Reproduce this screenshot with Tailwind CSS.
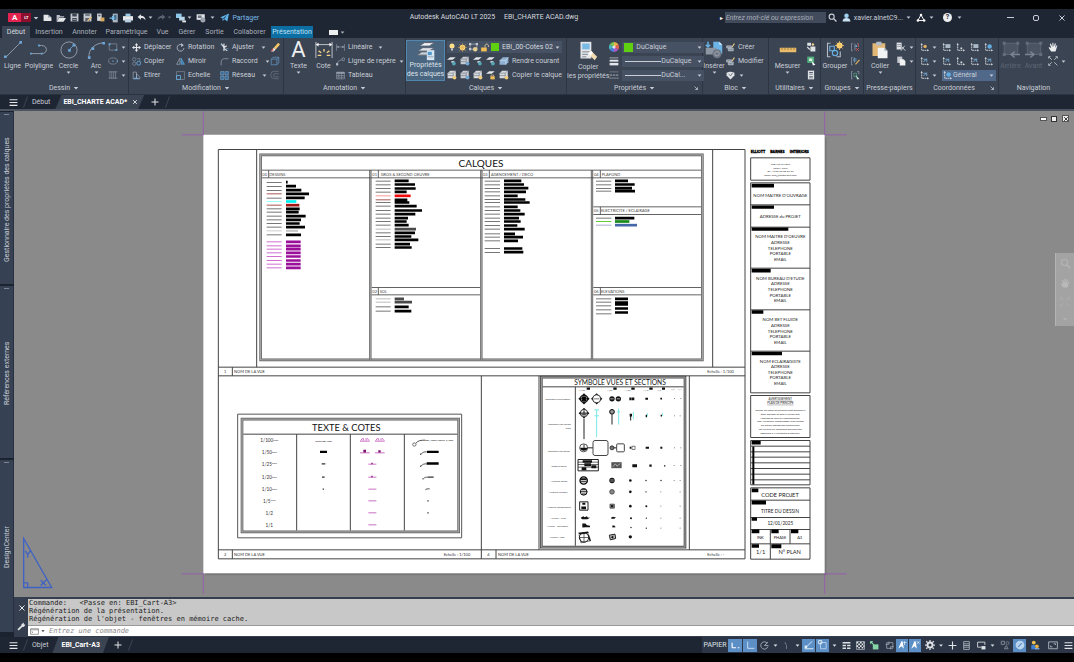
<!DOCTYPE html>
<html lang="fr">
<head>
<meta charset="utf-8">
<title>Autodesk AutoCAD LT 2025 - EBI_CHARTE ACAD.dwg</title>
<script src="https://cdn.jsdelivr.net/npm/@tailwindcss/browser@4"></script>
</head>
<body class="h-screen flex flex-col overflow-hidden bg-black py-[9px] font-['Roboto','Noto_Sans',sans-serif] text-[7px] leading-[10px] text-[#c9ced6] whitespace-nowrap">

<svg class="hidden" aria-hidden="true">
  <defs>
    <symbol id="dn" viewBox="0 0 8 8"><path d="M1 2.500h6L4 6z" fill="currentColor"/></symbol>
    <symbol id="menu" viewBox="0 0 16 16"><path d="M1 3h14M1 8h14M1 13h14" stroke="currentColor" stroke-width="2"/></symbol>
    <symbol id="plus" viewBox="0 0 16 16"><path d="M8 1v14M1 8h14" stroke="currentColor" stroke-width="2"/></symbol>
    <symbol id="x" viewBox="0 0 16 16"><path d="M3 3l10 10M13 3L3 13" stroke="currentColor" stroke-width="2"/></symbol>
    <symbol id="new" viewBox="0 0 16 16"><path d="M1 3h8l6 5v6H1z" fill="#e4e6e9"/><path d="M9 3v5h6" fill="#9aa1ab"/></symbol>
    <symbol id="open" viewBox="0 0 16 16"><path d="M1 14V3h5l1 2h6v2H5z" fill="#b9bec6"/><path d="M5 8h11l-4 6H1z" fill="#e4e6e9"/></symbol>
    <symbol id="save" viewBox="0 0 16 16"><path d="M1 1h14v14H1z" fill="#c3c8cf"/><path d="M4 1h8v5H4zM4 9h8v6H4z" fill="#3c4452"/><path d="M5 11h6v1H5z" fill="#ddd"/></symbol>
    <symbol id="saveas" viewBox="0 0 16 16"><path d="M1 1h14v14H1z" fill="#c3c8cf"/><path d="M4 2h8v3H4zM4 9h8v5H4z" fill="#5b626e"/><path d="M7 14l7-8 2 2-7 7z" fill="#e4bd74"/></symbol>
    <symbol id="web" viewBox="0 0 16 16"><path d="M2 1h8v13H2z" fill="#d5d8dc"/><path d="M8 8h7v7H8z" fill="#d9a860"/><path d="M4 3h4v3H4z" fill="#5b626e"/></symbol>
    <symbol id="mob" viewBox="0 0 16 16"><path d="M6 1h8v14H6z" fill="#aeb6c1"/><path d="M8 3h4v8H8z" fill="#3d6f92"/><path d="M1 8h6M5 5l3 3-3 3" stroke="#7cc3ee" stroke-width="2" fill="none"/></symbol>
    <symbol id="print" viewBox="0 0 16 16"><path d="M4 1h8v4H4z" fill="#9ac9ea"/><path d="M0 5h16v7H0z" fill="#e6e8ea"/><path d="M3 10h10v5H3z" fill="#b7cfe0"/></symbol>
    <symbol id="undo" viewBox="0 0 16 16"><path d="M1 7l6-5v3c5 0 8 3 8 8-2-3-4-4-8-4v3z" fill="currentColor"/></symbol>
    <symbol id="match" viewBox="0 0 16 16"><path d="M0 1h9v7H0z" fill="#8cc7ea"/><path d="M5 6h9v6H5z" fill="#b9d6e8"/><path d="M10 12h6v3h-6z" fill="#e4e6e9"/></symbol>
    <symbol id="mon" viewBox="0 0 16 16"><path d="M1 2h13v9H1z" fill="#dfe2e6"/><path d="M3 4h6v4H3z" fill="#6e7683"/><circle cx="11" cy="11" r="4" fill="#9aa3ae"/></symbol>
    <symbol id="plane" viewBox="0 0 16 16"><path d="M0 8l16-7-3 14-5-4-3 3-1-5z" fill="#5fb3ea"/><path d="M5 10l8-7-6 8z" fill="#1f2633"/></symbol>
    <symbol id="search" viewBox="0 0 16 16"><circle cx="6.500" cy="6.500" r="4.500" fill="none" stroke="currentColor" stroke-width="2"/><path d="M10 10l5 5" stroke="currentColor" stroke-width="2.500"/></symbol>
    <symbol id="user" viewBox="0 0 16 16"><circle cx="8" cy="5" r="4" fill="#9fd0f0"/><path d="M1 15c0-4 3-6 7-6s7 2 7 6z" fill="#c8e2f4"/></symbol>
    <symbol id="adsk" viewBox="0 0 16 16"><path d="M8 3L3 12M8 3l5 9M4 12h8" stroke="currentColor" stroke-width="1.500" fill="none"/><circle cx="8" cy="3" r="2" fill="currentColor"/><circle cx="3" cy="12" r="2" fill="currentColor"/><circle cx="13" cy="12" r="2" fill="currentColor"/></symbol>
    <symbol id="line" viewBox="0 0 20 20"><path d="M2 18L18 2" stroke="#99a2ae" fill="none"/><path d="M0 16h3v3H0zM17 0h3v3h-3z" fill="#6ba4d4"/></symbol>
    <symbol id="pline" viewBox="0 0 20 20"><path d="M1 14h12c7 0 7-9 0-9h-3" stroke="#99a2ae" fill="none"/><path d="M0 13h2v2H0zM9 4h2v2H9zM12 13h2v2h-2z" fill="#6ba4d4"/></symbol>
    <symbol id="circle" viewBox="0 0 20 20"><circle cx="10" cy="10" r="9" stroke="#99a2ae" fill="none"/><path d="M10 10l6-6" stroke="#6ba4d4"/><path d="M9 9h3v3H9zM14 3h3v3h-3z" fill="#6ba4d4"/></symbol>
    <symbol id="arc" viewBox="0 0 20 20"><path d="M2 18C2 8 9 3 18 2" stroke="#99a2ae" fill="none"/><path d="M1 17h3v3H1zM5 7h3v3H5zM17 1h3v3h-3z" fill="#6ba4d4"/></symbol>
    <symbol id="rect" viewBox="0 0 16 16"><path d="M2 3h12v10H2z" fill="none" stroke="#8e97a4"/><path d="M1 2h3v3H1zM12 11h3v3h-3z" fill="#6ba4d4"/></symbol>
    <symbol id="ell" viewBox="0 0 16 16"><ellipse cx="8" cy="8" rx="7" ry="5" fill="none" stroke="#8e97a4"/><path d="M7 7h2v2H7zM14 7h2v2h-2z" fill="#6ba4d4"/></symbol>
    <symbol id="hatch" viewBox="0 0 16 16"><path d="M3 2v12M6 2v12M9 2v12M12 2v12M1 3h14M1 13h14" stroke="#8e97a4" fill="none"/></symbol>
    <symbol id="move" viewBox="0 0 16 16"><path d="M8 0l3 4H5zM8 16l3-4H5zM0 8l4-3v6zM16 8l-4-3v6z" fill="#e4e6e9"/><path d="M8 3v10M3 8h10" stroke="#e4e6e9" stroke-width="2"/></symbol>
    <symbol id="copy" viewBox="0 0 16 16"><circle cx="4" cy="4" r="3" fill="none" stroke="#8fa3b8"/><circle cx="4" cy="12" r="3" fill="none" stroke="#8fa3b8"/><circle cx="12" cy="11" r="3.500" fill="none" stroke="#68b0e2" stroke-width="1.500"/><path d="M9 3h5v4" stroke="#8fa3b8" fill="none"/></symbol>
    <symbol id="stretch" viewBox="0 0 16 16"><path d="M2 2h6v12H2zM8 5l6 6v3H8z" fill="none" stroke="#b3bcc8"/><path d="M3 13h9" stroke="#68b0e2" stroke-width="2"/></symbol>
    <symbol id="rot" viewBox="0 0 16 16"><path d="M12 4a6 6 0 1 0 2 5" fill="none" stroke="#b3bcc8" stroke-width="1.500"/><path d="M9 0l5 4-5 3z" fill="#b3bcc8"/></symbol>
    <symbol id="mirror" viewBox="0 0 16 16"><path d="M7 2v11H1z" fill="none" stroke="#b3bcc8"/><path d="M9 2v11h6z" fill="#3e7db0" stroke="#68b0e2"/></symbol>
    <symbol id="scale" viewBox="0 0 16 16"><path d="M1 1h14v14H1z" fill="none" stroke="#8e97a4"/><path d="M1 8h7v7H1z" fill="none" stroke="#68b0e2" stroke-width="1.500"/></symbol>
    <symbol id="trim" viewBox="0 0 16 16"><path d="M2 1l6 8M7 1v13M12 5L6 9M8 10l5 4" stroke="#dfe2e6" stroke-width="2" fill="none"/><path d="M1 3h4M11 10h4" stroke="#68b0e2"/></symbol>
    <symbol id="fillet" viewBox="0 0 16 16"><path d="M2 15V9c0-4 3-6 6-6h7" fill="none" stroke="#8e97a4" stroke-width="1.500"/></symbol>
    <symbol id="array" viewBox="0 0 16 16"><path d="M1 1h6v6H1zM9 1h6v6H9zM1 9h6v6H1zM9 9h6v6H9z" fill="#3c6c96" stroke="#7fa9cc"/></symbol>
    <symbol id="erase" viewBox="0 0 16 16"><path d="M6 9l7-8 3 3-7 8z" fill="#f3c765"/><path d="M6 9l3 3-3 3H2z" fill="#eceef0"/><path d="M1 15l3-5 2 3z" fill="#dd5a4a"/></symbol>
    <symbol id="box" viewBox="0 0 16 16"><path d="M2 5h9v9H2zM2 5l3-3h9v9l-3 3M11 5l3-3" fill="none" stroke="#6ba4d4"/></symbol>
    <symbol id="offset" viewBox="0 0 16 16"><path d="M14 2H7a6 6 0 0 0 0 12h7M14 6H8a2 2 0 0 0 0 5h6" fill="none" stroke="#737c89"/></symbol>
    <symbol id="dim" viewBox="0 0 20 20"><path d="M1 1v18M19 1v18M1 4h18" stroke="#c9ced6" fill="none"/><path d="M1 4l3-2v4zM19 4l-3-2v4z" fill="#fff"/><path d="M10 9v3M4 11l3 2M16 11l-3 2M3 16h4M13 16h4" stroke="#f1d48a" stroke-width="1.500"/></symbol>
    <symbol id="lin" viewBox="0 0 16 16"><path d="M1 2v12M15 2v12M1 7h14" stroke="#9aa3b0" fill="none"/><path d="M1 7l4-2v4zM15 7l-4-2v4z" fill="#9aa3b0"/></symbol>
    <symbol id="lead" viewBox="0 0 16 16"><path d="M1 14c2-6 4-8 9-9" stroke="#b3bcc8" fill="none"/><circle cx="13" cy="4" r="2.500" fill="none" stroke="#b3bcc8"/><path d="M0 11h4v4H0z" fill="#b3bcc8"/></symbol>
    <symbol id="table" viewBox="0 0 16 16"><path d="M1 2h14v12H1zM1 8h14M1 11h14M5 5v9M10 5v9" fill="none" stroke="#9aa3b0"/><path d="M1 2h14v3H1z" fill="#9aa3b0"/></symbol>
    <symbol id="layers" viewBox="0 0 24 24"><path d="M1 17l6-4h15l-6 4z" fill="#c9cdd3" stroke="#555e6c"/><path d="M2 12l6-4h14l-6 4z" fill="#dde0e4" stroke="#555e6c"/><path d="M4 6l6-4h12l-6 4z" fill="#f1f2f4" stroke="#555e6c"/><path d="M13 11h9v12h-9z" fill="#d6e6f2"/><path d="M14 13h5v4h-5z" fill="#5499ce"/><path d="M14 19h7" stroke="#8b95a2"/></symbol>
    <symbol id="bulb" viewBox="0 0 16 16"><circle cx="8" cy="6" r="5" fill="#ffe08a"/><path d="M6 11h4v4H6z" fill="#c8ccd2"/></symbol>
    <symbol id="sun" viewBox="0 0 16 16"><circle cx="8" cy="8" r="5" fill="#ffd77a"/><path d="M8 0v16M0 8h16M2 2l12 12M14 2L2 14" stroke="#d7ab52"/></symbol>
    <symbol id="vpf" viewBox="0 0 16 16"><path d="M2 2h12v9H2z" fill="none" stroke="#c3c8cf"/><path d="M0 0h4v4H0zM12 0h4v4h-4zM0 9h4v4H0z" fill="#c3c8cf"/><circle cx="11" cy="11" r="4" fill="#e6cf8f"/></symbol>
    <symbol id="lock" viewBox="0 0 16 16"><path d="M2 8h10v7H2z" fill="#f1bd57"/><path d="M9 8V5c0-4 6-4 6 0v2" fill="none" stroke="#e8d3a0" stroke-width="1.500"/></symbol>
    <symbol id="l1" viewBox="0 0 16 16"><path d="M0 6l5-4h9l-5 4z" fill="#e4e6e9"/><path d="M7 8h5v3H7z" fill="#c3c8cf"/><circle cx="11" cy="12" r="3" fill="#55a7b8"/></symbol>
    <symbol id="l2" viewBox="0 0 16 16"><path d="M1 5l4-4h9v9l-4 3H1z" fill="#c8ccd2"/><path d="M1 5h9v8M10 5l4-4M1 9h9" stroke="#6e7683" fill="none"/><circle cx="12" cy="12" r="3" fill="#74a8d4"/></symbol>
    <symbol id="l3" viewBox="0 0 16 16"><path d="M1 5l4-4h9v9l-4 3H1z" fill="#d9dcdf"/><path d="M1 5h9v8M10 5l4-4M1 9h9" stroke="#6e7683" fill="none"/><circle cx="12" cy="12" r="3" fill="#f0cd7b"/></symbol>
    <symbol id="l4" viewBox="0 0 16 16"><path d="M0 6l5-4h9l-5 4z" fill="#e4e6e9"/><path d="M7 10h7v5H7z" fill="#f1bd57"/><path d="M8 10V8h4v2" stroke="#e8d3a0" fill="none"/></symbol>
    <symbol id="cur" viewBox="0 0 16 16"><path d="M1 7l5-5h9v8l-4 4H1z" fill="#8fb2d4"/><path d="M1 7h10v7M11 7l4-5" stroke="#d4e2ef" fill="none"/></symbol>
    <symbol id="cprop" viewBox="0 0 24 24"><path d="M3 1h13v20H3z" fill="#e4e6e9"/><path d="M5 3h9v7H5z" fill="#79b9e6"/><path d="M5 13h9M5 16h7M5 19h5" stroke="#6e7683"/><path d="M12 15l4-3 7 7-3 4z" fill="#f0dcb0"/><path d="M12 15l4-3 2 2-3 4z" fill="#fff"/></symbol>
    <symbol id="wheel" viewBox="0 0 16 16"><path d="M8 8V0a8 8 0 0 1 7 4z" fill="#f0b24a"/><path d="M8 8l7-4a8 8 0 0 1 0 8z" fill="#e2604f"/><path d="M8 8l7 4a8 8 0 0 1-7 4z" fill="#b05ac8"/><path d="M8 8v8a8 8 0 0 1-7-4z" fill="#4a7fdc"/><path d="M8 8l-7 4a8 8 0 0 1 0-8z" fill="#49b6c4"/><path d="M8 8L1 4a8 8 0 0 1 7-4z" fill="#7fc452"/><circle cx="8" cy="8" r="2.500" fill="#e4e6e9"/></symbol>
    <symbol id="lw" viewBox="0 0 16 16"><path d="M1 3h14" stroke="#e4e6e9"/><path d="M1 7.500h14" stroke="#e4e6e9" stroke-width="3"/><path d="M1 13h14" stroke="#e4e6e9" stroke-width="4"/></symbol>
    <symbol id="lt" viewBox="0 0 16 16"><path d="M1 3h14" stroke="#8e97a4"/><path d="M1 8h14" stroke="#8e97a4" stroke-width="2" stroke-dasharray="4 1"/><path d="M1 13h14" stroke="#8e97a4" stroke-width="2" stroke-dasharray="2 1"/></symbol>
    <symbol id="insert" viewBox="0 0 24 24"><path d="M11 1h8l4 4v12H11z" fill="#6db4e6"/><path d="M19 1l4 4h-4z" fill="#d5e8f6"/><path d="M1 9h14v9H1z" fill="#8d96a3"/><circle cx="16" cy="17" r="6" fill="#6e7683"/><circle cx="16" cy="17" r="3" fill="none" stroke="#aab1bb"/><path d="M4 1v7M1 5l3 3 3-3" stroke="#68b0e2" stroke-width="2" fill="none"/></symbol>
    <symbol id="blk" viewBox="0 0 16 16"><path d="M1 5h9v4H1zM4 9h9v5H4z" fill="#8d96a3" stroke="#c3c8cf"/><path d="M11 7l4-6" stroke="#f0d08a" stroke-width="2"/></symbol>
    <symbol id="tag" viewBox="0 0 16 16"><path d="M1 3c5-2 9-2 14 0v5l-7 7-7-7z" fill="#dfe2e6"/><path d="M5 5l3 4 4-6" stroke="#6e7683" stroke-width="1.500" fill="none"/></symbol>
    <symbol id="ruler" viewBox="0 0 24 24"><path d="M1 9h22v6H1z" fill="#e9bd6a"/><path d="M4 9v3M8 9v3M12 9v3M16 9v3M20 9v3" stroke="#8a6a30"/></symbol>
    <symbol id="qsel" viewBox="0 0 16 16"><path d="M2 1h6v5H2zM7 7h8v8H7z" fill="#dfe2e6"/><circle cx="11" cy="4" r="2" fill="#f0d08a"/><path d="M2 8l4 4" stroke="#dfe2e6" stroke-width="2"/></symbol>
    <symbol id="gsel" viewBox="0 0 16 16"><path d="M2 1h11v10H2z" fill="#53b07f"/><path d="M5 4h5v4H5z" fill="#dcefe4"/><path d="M9 8l6 6-4 1z" fill="#fff"/></symbol>
    <symbol id="calc" viewBox="0 0 16 16"><path d="M3 1h10v14H3z" fill="#dfe2e6"/><path d="M5 3h6v2H5zM5 7h6v1H5zM5 10h6v1H5zM5 12h6v1H5z" fill="#5b626e"/></symbol>
    <symbol id="group" viewBox="0 0 24 24"><path d="M6 3H2v18h4M14 21h5v-7" fill="none" stroke="#b3bcc8" stroke-width="1.500"/><path d="M5 7h6v6H5z" fill="none" stroke="#68b0e2" stroke-width="1.500"/><circle cx="12" cy="16" r="3.500" fill="none" stroke="#68b0e2" stroke-width="1.500"/><circle cx="18" cy="6" r="4" fill="#ffd77a"/><path d="M18 0v12M12 6h12M14 2l8 8M22 2l-8 8" stroke="#f2c566"/></symbol>
    <symbol id="g1" viewBox="0 0 16 16"><path d="M3 1H1v13h2M7 1v12M11 1h2" stroke="#b3bcc8" fill="none"/><path d="M8 4h3v3H8z" fill="#68b0e2"/><path d="M9 9l5 5M14 9l-5 5M13 1v6" stroke="#d9574e" stroke-width="1.500"/></symbol>
    <symbol id="g2" viewBox="0 0 16 16"><path d="M3 1H1v13h2M6 1v9" stroke="#b3bcc8" fill="none"/><path d="M5 3h4v4H5z" fill="none" stroke="#68b0e2"/><path d="M8 13l7-8" stroke="#e6b35e" stroke-width="2"/></symbol>
    <symbol id="g3" viewBox="0 0 16 16"><path d="M3 1H1v13h2M11 1h3v5" stroke="#b3bcc8" fill="none"/><path d="M5 4h5v6H5z" fill="none" stroke="#5fc08c"/><path d="M8 7l7 7-4 1z" fill="#bfe6cf"/></symbol>
    <symbol id="paste" viewBox="0 0 24 24"><path d="M2 3h17v17H2z" fill="#e2b775"/><path d="M7 1h7v5H7z" fill="#b3bcc8"/><path d="M9 9h9l4 4v10H9z" fill="#f1f2f4"/><path d="M18 9l4 4h-4z" fill="#a0a7b1"/></symbol>
    <symbol id="cut" viewBox="0 0 16 16"><path d="M1 1h8v11H1z" fill="#dfe2e6"/><path d="M2 4h6M2 7h6" stroke="#6e7683"/><path d="M8 6l7 8M14 6l-6 8" stroke="#c3c8cf" stroke-width="1.500"/></symbol>
    <symbol id="cpy" viewBox="0 0 16 16"><path d="M2 1h8v10H2z" fill="#c3c8cf"/><path d="M6 5h6l3 3v7H6z" fill="#f1f2f4"/></symbol>
    <symbol id="ucs" viewBox="0 0 16 16"><path d="M3 2v11h11" stroke="#dfe2e6" stroke-width="1.500" stroke-dasharray="3 1" fill="none"/><path d="M3 0l2 3H1zM16 13l-3-2v4z" fill="#dfe2e6"/></symbol>
    <symbol id="ucs0" viewBox="0 0 16 16"><use href="#ucs"/><path d="M8 8h3v3H8z" fill="#dfe2e6"/></symbol>
    <symbol id="ucs1" viewBox="0 0 16 16"><use href="#ucs"/><circle cx="9" cy="6" r="3" fill="#e8b362"/></symbol>
    <symbol id="ucs2" viewBox="0 0 16 16"><use href="#ucs"/><path d="M6 2h9v7H6z" fill="#aab8c8"/></symbol>
    <symbol id="ucs3" viewBox="0 0 16 16"><use href="#ucs"/><circle cx="10" cy="6" r="4" fill="#62ace0"/></symbol>
    <symbol id="ucs4" viewBox="0 0 16 16"><use href="#ucs"/><path d="M6 9l6-6M6 4h6v5" stroke="#7db2dc" stroke-width="1.500" fill="none"/></symbol>
    <symbol id="back" viewBox="0 0 24 24"><path d="M3 3h18v15H3z" fill="#4b5463" stroke="#636d7c"/><path d="M1 1h4v4H1zM19 1h4v4h-4zM1 16h4v4H1z" fill="#636d7c"/><path d="M13 18h11M17 14l-5 4 5 4" stroke="#7b8491" stroke-width="2" fill="none"/></symbol>
    <symbol id="fwd" viewBox="0 0 24 24"><path d="M3 3h18v15H3z" fill="#4b5463" stroke="#636d7c"/><path d="M1 1h4v4H1zM19 1h4v4h-4zM19 16h4v4h-4z" fill="#636d7c"/><path d="M0 18h11M7 14l5 4-5 4" stroke="#7b8491" stroke-width="2" fill="none"/></symbol>
    <symbol id="hand" viewBox="0 0 16 16"><path d="M5 15L1 9l1-1 3 2-2-7 1.500-.5L7 8V1h1.500L9 8l2-6 1.500.5L11.500 9 14 5l1 .5L12 15z" fill="#eceef0"/></symbol>
    <symbol id="zoomx" viewBox="0 0 16 16"><path d="M2 2l4 4M14 2l-4 4M2 14l4-4M10 10l5 5M1 4V1h3M12 1h3v3M1 12v3h3" stroke="#c9ced6" fill="none" stroke-width="1.300"/></symbol>
    <symbol id="corner" viewBox="0 0 8 8"><path d="M2 2l4 4M6 3v3H3" stroke="currentColor" fill="none"/></symbol>
  </defs>
</svg>

<header class="bg-[#1f2633] shrink-0">
  <div class="relative flex items-center h-[17px] pl-2">
    <button class="flex items-center bg-[#e2224f] text-white font-bold text-[8px] leading-[9px] h-[9px] pl-1" aria-label="Menu AutoCAD">A<span class="ml-1 bg-[#8c0f2e] text-[4px] h-[9px] w-[10px] flex items-center justify-center">LT</span></button>
    <button class="ml-[2px] w-[6px]" aria-label="Menu"><svg class="size-[6px]"><use href="#dn"/></svg></button>
    <div class="flex items-center gap-[4px] ml-[4px]">
      <button aria-label="Nouveau"><svg class="size-[9px]"><use href="#new"/></svg></button>
      <button aria-label="Ouvrir"><svg class="size-[10px]"><use href="#open"/></svg></button>
      <button aria-label="Enregistrer"><svg class="size-[9px]"><use href="#save"/></svg></button>
      <button aria-label="Enregistrer sous"><svg class="size-[9px]"><use href="#saveas"/></svg></button>
      <button aria-label="Ouvrir depuis le web"><svg class="size-[9px]"><use href="#web"/></svg></button>
      <button aria-label="Enregistrer sur mobile"><svg class="size-[10px]"><use href="#mob"/></svg></button>
      <button aria-label="Tracer"><svg class="size-[10px]"><use href="#print"/></svg></button>
      <button aria-label="Annuler"><svg class="size-[9px] text-[#e4e6e9]"><use href="#undo"/></svg></button>
      <svg class="size-[5px] -ml-[2px]"><use href="#dn"/></svg>
      <button aria-label="Rétablir"><svg class="size-[9px] text-[#596271] -scale-x-100"><use href="#undo"/></svg></button>
      <svg class="size-[5px] -ml-[3px] text-[#596271]"><use href="#dn"/></svg>
      <button aria-label="Gestion"><svg class="size-[10px]"><use href="#match"/></svg></button>
      <svg class="size-[5px] -ml-[3px]"><use href="#dn"/></svg>
      <button aria-label="Affichage"><svg class="size-[10px]"><use href="#mon"/></svg></button>
      <svg class="size-[5px]"><use href="#dn"/></svg>
      <button class="flex items-center gap-[3px] ml-px text-[#78b9e8]"><svg class="size-[9px]"><use href="#plane"/></svg>Partager</button>
    </div>
    <div class="absolute inset-x-0 top-[3px] text-center pointer-events-none pr-[86px] text-[#d5d9df]">Autodesk AutoCAD LT 2025 &nbsp;&nbsp;&nbsp; EBI_CHARTE ACAD.dwg</div>
    <div class="ml-auto flex items-center">
      <span class="text-white text-[6px] mr-[2px]">▸</span>
      <input class="w-[101px] h-[11px] bg-[#414b5c] px-px italic placeholder:text-[#a9b0bb]" aria-label="Recherche" placeholder="Entrez mot-clé ou expression">
      <button class="ml-[2px]" aria-label="Rechercher"><svg class="size-[9px]"><use href="#search"/></svg></button>
      <button class="ml-[5px] flex items-center gap-[3px]"><svg class="size-[9px]"><use href="#user"/></svg>xavier.alnetC9...<svg class="size-[5px]"><use href="#dn"/></svg></button>
      <button class="ml-[5px] flex items-center gap-[3px]" aria-label="Autodesk"><svg class="size-[10px] text-white"><use href="#adsk"/></svg><svg class="size-[5px]"><use href="#dn"/></svg></button>
      <button class="ml-[9px] flex items-center gap-[5px]" aria-label="Aide"><span class="size-[9px] rounded-full bg-[#eceef0] text-[#1f2633] font-bold leading-[9px]">?</span><svg class="size-[5px]"><use href="#dn"/></svg></button>
      <button class="ml-[45px] w-[7px] h-px bg-[#c9ced6]" aria-label="Réduire"></button>
      <button class="ml-[19px] size-[6px] border border-[#c9ced6] rounded-[2px]" aria-label="Restaurer"></button>
      <button class="ml-[19px] mr-[8px]" aria-label="Fermer"><svg class="size-[8px]"><use href="#x"/></svg></button>
    </div>
  </div>
  <nav class="flex items-stretch h-[12px] leading-[12px] text-[#a9b0bb]" aria-label="Ruban">
    <a href="#" class="ml-[2px] w-[28px] text-center bg-[#3b4453] text-[#d5d9df]">Début</a>
    <a href="#" class="w-[38px] text-center">Insertion</a>
    <a href="#" class="w-[33px] text-center">Annoter</a>
    <a href="#" class="w-[51px] text-center">Paramétrique</a>
    <a href="#" class="w-[21px] text-center">Vue</a>
    <a href="#" class="w-[28px] text-center">Gérer</a>
    <a href="#" class="w-[27px] text-center">Sortie</a>
    <a href="#" class="w-[43px] text-center">Collaborer</a>
    <a href="#" class="w-[42px] text-center bg-[#0d6ea3] text-[#bfe2f5]">Présentation</a>
    <button class="ml-[16px] flex items-center gap-[2px]" aria-label="Options du ruban"><span class="w-[9px] h-[5px] bg-[#eceef0]"></span><svg class="size-[5px]"><use href="#dn"/></svg></button>
  </nav>
</header>

<div class="flex h-[57px] shrink-0 bg-[#3b4453] border-b border-[#2b3341]">
  <section class="w-[129px] shrink-0 border-r border-[#2d3543] flex flex-col pt-[2px]">
    <div class="flex h-[42px]">
      <button class="w-[25px] flex flex-col items-center pt-px"><svg class="size-[18px]"><use href="#line"/></svg><span class="mt-[2px]">Ligne</span></button>
      <button class="w-[28px] flex flex-col items-center pt-px"><svg class="size-[18px]"><use href="#pline"/></svg><span class="mt-[2px]">Polyligne</span></button>
      <button class="w-[31px] flex flex-col items-center pt-px"><svg class="size-[18px]"><use href="#circle"/></svg><span class="mt-[2px]">Cercle</span><svg class="size-[5px] -mt-px"><use href="#dn"/></svg></button>
      <button class="w-[24px] flex flex-col items-center pt-px"><svg class="size-[18px]"><use href="#arc"/></svg><span class="mt-[2px]">Arc</span><svg class="size-[5px] -mt-px"><use href="#dn"/></svg></button>
      <div class="flex flex-col">
        <button class="h-[14px] flex items-center gap-[3px]" aria-label="Rectangle"><svg class="size-[10px]"><use href="#rect"/></svg><svg class="size-[5px]"><use href="#dn"/></svg></button>
        <button class="h-[14px] flex items-center gap-[3px]" aria-label="Ellipse"><svg class="size-[10px]"><use href="#ell"/></svg><svg class="size-[5px]"><use href="#dn"/></svg></button>
        <button class="h-[14px] flex items-center gap-[3px]" aria-label="Hachures"><svg class="size-[10px]"><use href="#hatch"/></svg><svg class="size-[5px]"><use href="#dn"/></svg></button>
      </div>
    </div>
    <button class="h-[12px] flex items-center justify-center gap-[3px]">Dessin<svg class="size-[6px]"><use href="#dn"/></svg></button>
  </section>

  <section class="w-[155px] shrink-0 border-r border-[#2d3543] flex flex-col pt-[2px]">
    <div class="flex h-[42px] pl-[3px]">
      <div class="w-[44px]">
        <button class="h-[14px] flex items-center gap-[3px]"><svg class="size-[9px]"><use href="#move"/></svg>Déplacer</button>
        <button class="h-[14px] flex items-center gap-[3px]"><svg class="size-[9px]"><use href="#copy"/></svg>Copier</button>
        <button class="h-[14px] flex items-center gap-[3px]"><svg class="size-[9px]"><use href="#stretch"/></svg>Etirer</button>
      </div>
      <div class="w-[44px]">
        <button class="h-[14px] flex items-center gap-[3px]"><svg class="size-[9px]"><use href="#rot"/></svg>Rotation</button>
        <button class="h-[14px] flex items-center gap-[3px]"><svg class="size-[9px]"><use href="#mirror"/></svg>Miroir</button>
        <button class="h-[14px] flex items-center gap-[3px]"><svg class="size-[9px]"><use href="#scale"/></svg>Echelle</button>
      </div>
      <div class="w-[50px]">
        <button class="h-[14px] flex items-center gap-[3px]"><svg class="size-[9px]"><use href="#trim"/></svg>Ajuster<svg class="size-[5px] ml-[4px]"><use href="#dn"/></svg></button>
        <button class="h-[14px] flex items-center gap-[3px]"><svg class="size-[9px]"><use href="#fillet"/></svg>Raccord<svg class="size-[5px] ml-[4px]"><use href="#dn"/></svg></button>
        <button class="h-[14px] flex items-center gap-[3px]"><svg class="size-[9px]"><use href="#array"/></svg>Réseau<svg class="size-[5px] ml-[4px]"><use href="#dn"/></svg></button>
      </div>
      <div>
        <button class="h-[14px] flex items-center" aria-label="Effacer"><svg class="size-[10px]"><use href="#erase"/></svg></button>
        <button class="h-[14px] flex items-center" aria-label="Décomposer"><svg class="size-[10px]"><use href="#box"/></svg></button>
        <button class="h-[14px] flex items-center" aria-label="Décaler"><svg class="size-[10px]"><use href="#offset"/></svg></button>
      </div>
    </div>
    <button class="h-[12px] flex items-center justify-center gap-[3px]">Modification<svg class="size-[6px]"><use href="#dn"/></svg></button>
  </section>

  <section class="w-[122px] shrink-0 border-r border-[#2d3543] flex flex-col pt-[2px]">
    <div class="flex h-[42px] pl-[2px]">
      <button class="w-[25px] flex flex-col items-center pt-px"><span class="h-[18px] text-[22px] leading-[18px] text-[#eceef0]">A</span><span class="mt-[2px]">Texte</span><svg class="size-[5px] -mt-px"><use href="#dn"/></svg></button>
      <button class="w-[25px] flex flex-col items-center pt-px"><svg class="size-[18px]"><use href="#dim"/></svg><span class="mt-[2px]">Cote</span></button>
      <div>
        <button class="h-[14px] flex items-center gap-[3px]"><svg class="size-[9px]"><use href="#lin"/></svg>Linéaire<svg class="size-[5px] ml-[2px]"><use href="#dn"/></svg></button>
        <button class="h-[14px] flex items-center gap-[3px]"><svg class="size-[9px]"><use href="#lead"/></svg>Ligne de repère<svg class="size-[5px]"><use href="#dn"/></svg></button>
        <button class="h-[14px] flex items-center gap-[3px]"><svg class="size-[9px]"><use href="#table"/></svg>Tableau</button>
      </div>
    </div>
    <button class="h-[12px] flex items-center justify-center gap-[3px]">Annotation<svg class="size-[6px]"><use href="#dn"/></svg></button>
  </section>

  <section class="w-[161px] shrink-0 border-r border-[#2d3543] flex flex-col pt-[2px]">
    <div class="flex h-[42px]">
      <button class="w-[39px] h-[41px] border border-[#5186ae] bg-[#4a6580] flex flex-col items-center text-[#dde2e8] leading-[9px] "><svg class="size-[20px] shrink-0"><use href="#layers"/></svg>Propriétés<br>des calques</button>
      <div class="pl-[2px]">
        <div class="h-[14px] flex items-center">
          <div class="relative flex items-center h-[12px] w-[115px] bg-[#465164] gap-[2px] pl-px">
            <svg class="size-[8px]"><use href="#bulb"/></svg><svg class="size-[9px]"><use href="#sun"/></svg><svg class="size-[9px]"><use href="#vpf"/></svg><svg class="size-[9px]"><use href="#lock"/></svg><span class="size-[8px] bg-[#5fd00f]"></span>
            <select class="appearance-none flex-1 min-w-0 bg-transparent text-[#d5d9df] pl-px" aria-label="Calque courant"><option>EBI_00-Cotes 02</option></select>
            <svg class="absolute right-[2px] size-[5px] pointer-events-none"><use href="#dn"/></svg>
          </div>
        </div>
        <div class="h-[14px] flex items-center gap-[3px]">
          <button aria-label="Désactiver"><svg class="size-[10px]"><use href="#l1"/></svg></button><button aria-label="Isoler"><svg class="size-[10px]"><use href="#l2"/></svg></button><button aria-label="Geler"><svg class="size-[10px]"><use href="#l1"/></svg></button><button aria-label="Verrouiller"><svg class="size-[10px]"><use href="#l1"/></svg></button>
          <button class="flex items-center gap-[3px]"><svg class="size-[10px]"><use href="#cur"/></svg>Rendre courant</button>
        </div>
        <div class="h-[14px] flex items-center gap-[3px]">
          <button aria-label="Activer"><svg class="size-[10px]"><use href="#l3"/></svg></button><button aria-label="Annuler l'isolation"><svg class="size-[10px]"><use href="#l2"/></svg></button><button aria-label="Dégeler"><svg class="size-[10px]"><use href="#l3"/></svg></button><button aria-label="Déverrouiller"><svg class="size-[10px]"><use href="#l4"/></svg></button>
          <button class="flex items-center gap-[3px]"><svg class="size-[10px]"><use href="#l3"/></svg>Copier le calque</button>
        </div>
      </div>
    </div>
    <button class="h-[12px] flex items-center justify-center gap-[3px]">Calques<svg class="size-[6px]"><use href="#dn"/></svg></button>
  </section>

  <section class="w-[136px] shrink-0 border-r border-[#2d3543] flex flex-col pt-[2px]">
    <div class="flex h-[42px]">
      <button class="w-[44px] flex flex-col items-center pt-px leading-[9px]"><svg class="size-[20px] shrink-0"><use href="#cprop"/></svg><span class="pt-[2px]">Copier<br>les propriétés</span></button>
      <div class="flex-1 pr-[3px]">
        <label class="relative h-[14px] flex items-center gap-[3px]"><svg class="size-[10px]"><use href="#wheel"/></svg><span class="flex items-center flex-1 h-[11px] bg-[#465164] pl-[2px] gap-[3px]"><span class="size-[9px] bg-[#5fd00f]"></span><select class="appearance-none flex-1 min-w-0" aria-label="Couleur"><option>DuCalque</option></select></span><svg class="absolute right-[2px] size-[5px] pointer-events-none"><use href="#dn"/></svg></label>
        <label class="relative h-[14px] flex items-center gap-[3px]"><svg class="size-[10px]"><use href="#lw"/></svg><span class="flex items-center flex-1 h-[11px] bg-[#465164] pl-[3px]"><span class="w-[36px] h-px bg-[#c9ced6]"></span><select class="appearance-none flex-1 min-w-0 mr-[12px]" aria-label="Epaisseur de ligne"><option>DuCalque</option></select></span><svg class="absolute right-[2px] size-[5px] pointer-events-none"><use href="#dn"/></svg></label>
        <label class="relative h-[14px] flex items-center gap-[3px]"><svg class="size-[10px]"><use href="#lt"/></svg><span class="flex items-center flex-1 h-[11px] bg-[#465164] pl-[3px]"><span class="w-[36px] h-px bg-[#c9ced6]"></span><select class="appearance-none flex-1 min-w-0 mr-[12px]" aria-label="Type de ligne"><option>DuCal...</option></select></span><svg class="absolute right-[2px] size-[5px] pointer-events-none"><use href="#dn"/></svg></label>
      </div>
    </div>
    <div class="relative h-[12px] flex items-center justify-center"><button class="flex items-center gap-[3px]">Propriétés<svg class="size-[6px]"><use href="#dn"/></svg></button><button class="absolute right-[3px]" aria-label="Options"><svg class="size-[6px]"><use href="#corner"/></svg></button></div>
  </section>

  <section class="w-[66px] shrink-0 border-r border-[#2d3543] flex flex-col pt-[2px]">
    <div class="flex h-[42px]">
      <button class="w-[22px] shrink-0 flex flex-col items-center pt-px"><svg class="size-[18px]"><use href="#insert"/></svg><span class="mt-[2px]">Insérer</span><svg class="size-[5px] -mt-px"><use href="#dn"/></svg></button>
      <div class="pl-px">
        <button class="h-[14px] flex items-center gap-[3px]"><svg class="size-[9px]"><use href="#blk"/></svg>Créer</button>
        <button class="h-[14px] flex items-center gap-[3px]"><svg class="size-[9px]"><use href="#blk"/></svg>Modifier</button>
        <button class="h-[14px] flex items-center gap-[4px]" aria-label="Attributs"><svg class="size-[9px]"><use href="#tag"/></svg><svg class="size-[5px]"><use href="#dn"/></svg></button>
      </div>
    </div>
    <button class="h-[12px] flex items-center justify-center gap-[3px]">Bloc<svg class="size-[6px]"><use href="#dn"/></svg></button>
  </section>

  <section class="w-[52px] shrink-0 border-r border-[#2d3543] flex flex-col pt-[2px]">
    <div class="flex h-[42px]">
      <button class="w-[37px] flex flex-col items-center pt-px"><svg class="size-[18px]"><use href="#ruler"/></svg><span class="mt-[2px]">Mesurer</span><svg class="size-[5px] -mt-px"><use href="#dn"/></svg></button>
      <div>
        <button class="h-[14px] flex items-center" aria-label="Sélection rapide"><svg class="size-[10px]"><use href="#qsel"/></svg></button>
        <button class="h-[14px] flex items-center" aria-label="Tout sélectionner"><svg class="size-[10px]"><use href="#gsel"/></svg></button>
        <button class="h-[14px] flex items-center" aria-label="Calculatrice"><svg class="size-[10px]"><use href="#calc"/></svg></button>
      </div>
    </div>
    <button class="h-[12px] flex items-center justify-center gap-[3px]">Utilitaires<svg class="size-[6px]"><use href="#dn"/></svg></button>
  </section>

  <section class="w-[43px] shrink-0 border-r border-[#2d3543] flex flex-col pt-[2px]">
    <div class="flex h-[42px]">
      <button class="w-[28px] flex flex-col items-center pt-px"><svg class="size-[18px]"><use href="#group"/></svg><span class="mt-[2px]">Grouper</span></button>
      <div class="pl-[2px]">
        <button class="h-[14px] flex items-center" aria-label="Dissocier"><svg class="size-[9px]"><use href="#g1"/></svg></button>
        <button class="h-[14px] flex items-center" aria-label="Modifier le groupe"><svg class="size-[9px]"><use href="#g2"/></svg></button>
        <button class="h-[14px] flex items-center" aria-label="Sélection de groupe"><svg class="size-[9px]"><use href="#g3"/></svg></button>
      </div>
    </div>
    <button class="h-[12px] flex items-center justify-center gap-[3px]">Groupes<svg class="size-[6px]"><use href="#dn"/></svg></button>
  </section>

  <section class="w-[52px] shrink-0 border-r border-[#2d3543] flex flex-col pt-[2px]">
    <div class="flex h-[42px]">
      <button class="w-[32px] flex flex-col items-center pt-px"><svg class="size-[18px]"><use href="#paste"/></svg><span class="mt-[2px]">Coller</span><svg class="size-[5px] -mt-px"><use href="#dn"/></svg></button>
      <div>
        <button class="h-[14px] flex items-center gap-[3px]" aria-label="Couper"><svg class="size-[10px]"><use href="#cut"/></svg><svg class="size-[5px]"><use href="#dn"/></svg></button>
        <button class="h-[14px] flex items-center gap-[3px]" aria-label="Copier dans le presse-papiers"><svg class="size-[10px]"><use href="#cpy"/></svg><svg class="size-[5px]"><use href="#dn"/></svg></button>
      </div>
    </div>
    <div class="h-[12px] flex items-center justify-center">Presse-papiers</div>
  </section>

  <section class="w-[83px] shrink-0 border-r border-[#2d3543] flex flex-col pt-[2px]">
    <div class="flex h-[42px] pl-[4px]">
      <div class="w-[22px]">
        <button class="h-[14px] flex items-center gap-[3px]" aria-label="SCU"><svg class="size-[9px]"><use href="#ucs1"/></svg><svg class="size-[5px]"><use href="#dn"/></svg></button>
        <button class="h-[14px] flex items-center gap-[3px]" aria-label="SCU vue"><svg class="size-[9px]"><use href="#ucs4"/></svg><svg class="size-[5px]"><use href="#dn"/></svg></button>
        <button class="h-[14px] flex items-center gap-[3px]" aria-label="SCU axe"><svg class="size-[9px]"><use href="#ucs4"/></svg><svg class="size-[5px]"><use href="#dn"/></svg></button>
      </div>
      <div>
        <div class="h-[14px] flex items-center gap-[5px]"><button aria-label="Icône SCU"><svg class="size-[9px]"><use href="#ucs2"/></svg></button><button aria-label="Origine"><svg class="size-[9px]"><use href="#ucs0"/></svg></button><button aria-label="SCU nommé"><svg class="size-[9px]"><use href="#ucs2"/></svg></button><button aria-label="SCU général"><svg class="size-[9px]"><use href="#ucs3"/></svg></button></div>
        <div class="h-[14px] flex items-center gap-[5px]"><button aria-label="SCU précédent"><svg class="size-[9px]"><use href="#ucs4"/></svg></button><button aria-label="SCU face"><svg class="size-[9px]"><use href="#ucs0"/></svg></button><button aria-label="SCU 3 points"><svg class="size-[9px]"><use href="#ucs4"/></svg></button><button aria-label="SCU Z"><svg class="size-[9px]"><use href="#ucs4"/></svg></button></div>
        <label class="relative h-[14px] flex items-center"><span class="flex items-center w-[54px] h-[11px] bg-[#50688a] gap-px pl-px"><svg class="size-[9px]"><use href="#ucs3"/></svg><select class="appearance-none flex-1 min-w-0" aria-label="SCU nommés"><option>Général</option></select></span><svg class="absolute right-[2px] size-[5px] pointer-events-none"><use href="#dn"/></svg></label>
      </div>
    </div>
    <div class="relative h-[12px] flex items-center justify-center pr-[6px]">Coordonnées<button class="absolute right-[3px]" aria-label="Options"><svg class="size-[6px]"><use href="#corner"/></svg></button></div>
  </section>

  <section class="flex-1 flex flex-col pt-[2px]">
    <div class="flex h-[42px]">
      <button class="w-[23px] flex flex-col items-center pt-px text-[#5d6675]"><svg class="size-[18px]"><use href="#back"/></svg><span class="mt-[2px]">Arrière</span></button>
      <button class="w-[23px] flex flex-col items-center pt-px text-[#5d6675]"><svg class="size-[18px]"><use href="#fwd"/></svg><span class="mt-[2px]">Avant</span></button>
      <div class="pl-[3px]">
        <button class="h-[14px] flex items-center" aria-label="Panoramique"><svg class="size-[10px]"><use href="#hand"/></svg></button>
        <button class="h-[14px] flex items-center gap-[3px]" aria-label="Zoom étendu"><svg class="size-[10px]"><use href="#zoomx"/></svg><svg class="size-[5px]"><use href="#dn"/></svg></button>
      </div>
    </div>
    <div class="h-[12px] flex items-center justify-center pr-[6px]">Navigation</div>
  </section>
</div>

<nav class="flex items-center h-[14px] shrink-0 bg-[#1f2633] pl-[9px]" aria-label="Fichiers">
  <button class="text-[#e4e6e9]" aria-label="Menu fichiers"><svg class="size-[9px]"><use href="#menu"/></svg></button>
  <span class="ml-[7px] h-[12px] w-px rotate-[20deg] bg-[#3b4453]"></span>
  <a href="#" class="ml-[6px]">Début</a>
  <span class="ml-[5px] flex items-center gap-[5px] h-[14px] bg-[#3b4453] pl-[8px] pr-[6px] [clip-path:polygon(6px_0,100%_0,calc(100%-6px)_100%,0_100%)] text-white font-bold"><a href="#">EBI_CHARTE ACAD*</a><button aria-label="Fermer l'onglet"><svg class="size-[6px]"><use href="#x"/></svg></button></span>
  <button class="ml-[7px] text-[#e4e6e9]" aria-label="Nouvel onglet"><svg class="size-[8px]"><use href="#plus"/></svg></button>
  <span class="ml-[8px] h-[12px] w-px rotate-[20deg] bg-[#3b4453]"></span>
</nav>

<main class="flex flex-1 min-h-0 border-t-2 border-[#4c5461] bg-[#2c3646]">
  <aside class="w-[14px] shrink-0 flex flex-col gap-[2px] bg-[#1b2230] pt-px pb-[5px]">
    <section class="flex-1 bg-[#364153] border-r border-[#273042] flex flex-col items-center"><span class="mt-[2px] w-[5px] h-px bg-[#7d8694]"></span><h2 class="flex-1 [writing-mode:vertical-rl] rotate-180 text-center">Gestionnaire des propriétés des calques</h2></section>
    <section class="flex-1 bg-[#364153] border-r border-[#273042] flex flex-col items-center"><span class="mt-[2px] w-[5px] h-px bg-[#7d8694]"></span><h2 class="flex-1 [writing-mode:vertical-rl] rotate-180 text-center">Références externes</h2></section>
    <section class="flex-1 bg-[#364153] border-r border-[#273042] flex flex-col items-center"><span class="mt-[2px] w-[5px] h-px bg-[#7d8694]"></span><h2 class="flex-1 [writing-mode:vertical-rl] rotate-180 text-center">DesignCenter</h2></section>
  </aside>
  <div class="flex-1 min-w-0 flex flex-col">
    <div class="relative flex-1 min-h-0 bg-[#8a8a8a]">
      <svg class="size-full block" viewBox="0 0 3180 1455" font-family="Lato, 'Open Sans', sans-serif" fill="#111" role="img" aria-label="Présentation EBI_Cart-A3">
        <g transform="translate(558 57)">
          <path d="M16 20H1880V1334H16z" fill="#7a7a7a"/>
          <path d="M10 13H1874V1328H10z" fill="#fff"/>
          <path d="M10-57V13M-56 13H10M1874-57V13H1940M10 1390V1330M-56 1330H10M1874 1390V1330H1940" stroke="#9a4cba" stroke-width="2" fill="none"/>

          <!-- cadres des fenêtres -->
          <path d="M55 57H1635V1285H55zM170 57V710M1538 57V710M55 710H1635M55 736H1635M97 710V736M844 736V1285M55 1258H1635M97 1258V1285M888 1258V1285M1017 736V1258M1468 736V1258" fill="none" stroke="#444" stroke-width="3"/>
          <g font-size="12" fill="#333">
            <text x="72" y="728">1</text><text x="102" y="728">NOM DE LA VUE</text><text x="1522" y="728">Echelle : 1/100</text>
            <text x="72" y="1277">2</text><text x="102" y="1277">NOM DE LA VUE</text><text x="731" y="1277">Echelle : 1/100</text>
            <text x="862" y="1277">4</text><text x="894" y="1277">NOM DE LA VUE</text><text x="1522" y="1277">Echelle : -</text>
          </g>

          <!-- CALQUES -->
          <path d="M182 73H1507V688H182z" fill="none" stroke="#5c5c5c" stroke-width="8"/>
          <path d="M182 73H1507V688H182z" fill="none" stroke="#a4a4a4" stroke-width="4"/>
          <path d="M511 119V688M844 119V688M1176 119V688" stroke="#5c5c5c" stroke-width="7"/>
          <path d="M511 119V688M844 119V688M1176 119V688" stroke="#a4a4a4" stroke-width="3"/>
          <path d="M186 119H1503M186 142H1503M206 119V142M535 119V142M868 119V142M1201 119V142M515 471H840M515 493H840M535 471V493M1180 229H1503M1180 252H1503M1201 229V252M1180 471H1503M1180 493H1503M1201 471V493" stroke="#444" stroke-width="2.500"/>
          <text x="843" y="108" font-size="30" text-anchor="middle">CALQUES</text>
          <g font-size="12" fill="#444">
            <text x="187" y="135">00</text><text x="208" y="135">DESSINS</text>
            <text x="517" y="135">01</text><text x="542" y="135">GROS &amp; SECOND OEUVRE</text>
            <text x="849" y="135">03</text><text x="873" y="135">AGENCEMENT / DECO</text>
            <text x="1182" y="135">04</text><text x="1205" y="135">PLAFOND</text>
            <text x="517" y="487">02</text><text x="539" y="487">SOL</text>
            <text x="1182" y="245">05</text><text x="1203" y="245">ELECTRICITE / ECLAIRAGE</text>
            <text x="1182" y="487">06</text><text x="1203" y="487">ELEVATIONS</text>
          </g>
          <g stroke="#777" stroke-width="3">
            <path d="M200 156h45M200 168h45M200 180h45M200 203h45M200 235h45M200 245h45M200 257h45M200 268h45M200 279h45M200 290h45M200 313h45"/>
            <path d="M200 190h45M200 224h45" stroke="#a55"/><path d="M200 213h45" stroke="#9ff"/><path d="M200 301h45" stroke="#ccc"/>
            <path d="M200 334h45M200 346h45M200 356h45M200 367h45M200 378h45M200 390h45M200 401h45M200 412h45" stroke="#d070d0"/>
            <path d="M527 152h45M527 163h45M527 174h45M527 185h45M527 216h45M527 227h45M527 240h45M527 251h45M527 263h45M527 273h45M527 284h45M527 307h45M527 318h45M527 341h45M527 351h45M527 529h45M527 542h45"/>
            <path d="M527 208h45" stroke="#a55"/><path d="M527 196h45" stroke="#f99"/><path d="M527 296h45M527 328h45M527 505h45M527 515h45" stroke="#bbb"/>
            <path d="M854 152h46M854 163h46M854 174h46M854 184h46M854 196h46M854 207h46M854 216h46M854 229h46M854 240h46M854 251h46M854 263h46M854 273h46M854 285h46M854 296h46M854 310h46M854 320h46M854 331h46M854 354h46M854 366h46"/>
            <path d="M1188 152h46M1188 163h46M1188 174h46M1188 182h46M1188 263h46M1188 505h46M1188 515h46M1188 526h46M1188 538h46M1188 550h46"/>
            <path d="M1188 273h46" stroke="#6c3"/><path d="M1188 284h46" stroke="#aac"/>
          </g>
          <g stroke="#000" stroke-width="8">
            <path d="M258 155h5M258 167h30M258 179h46M258 190h69M258 202h56M258 235h41M258 245h38M258 257h59M258 268h45M258 279h41M258 290h57M258 313h45"/>
            <path d="M258 213h31" stroke="#00f0f0"/><path d="M258 224h40" stroke="#a31515"/><path d="M258 301h36" stroke="#c4c4c4" stroke-width="6"/>
            <path d="M258 334h44M258 346h44M258 356h44M258 367h44M258 378h44M258 390h44M258 401h44M258 412h44" stroke="#9a109a"/>
            <path d="M584 151h42M584 162h61M584 174h63M584 184h36M584 208h38M584 216h44M584 227h66M584 240h82M584 251h62M584 263h40M584 273h36M584 284h42M584 307h61M584 318h50M584 328h71M584 341h46M584 351h51M584 529h42M584 542h50"/>
            <path d="M584 196h48" stroke="#f00c0c"/><path d="M584 296h64M584 505h28M584 515h52" stroke="#4a4a4a"/>
            <path d="M912 151h52M912 162h60M912 173h73M912 184h66M912 196h41M912 207h64M912 216h77M912 229h41M912 240h49M912 251h62M912 263h45M912 273h50M912 285h40M912 296h62M912 310h33M912 320h57M912 331h42M912 354h55M912 365h58"/>
            <path d="M1245 151h39M1245 162h59M1245 173h51M1245 182h60M1245 263h58M1245 505h39M1245 516h39M1245 522h39M1245 534h39M1245 546h39"/>
            <path d="M1245 273h43" stroke="#168a16"/><path d="M1245 284h66" stroke="#4468a8"/>
          </g>

          <!-- TEXTE & COTES -->
          <g transform="translate(0 720)">
            <path d="M113 131H785V502H113z" fill="none" stroke="#555" stroke-width="3"/>
            <path d="M126 146H776V484H126z" fill="none" stroke="#5c5c5c" stroke-width="8"/>
            <path d="M126 146H776V484H126z" fill="none" stroke="#a4a4a4" stroke-width="4"/>
            <path d="M130 191H772M290 191V480M451 191V480M613 191V480" stroke="#444" stroke-width="3"/>
            <text x="439" y="181" font-size="28" text-anchor="middle">TEXTE &amp; COTES</text>
            <g font-size="14" text-anchor="middle" fill="#333">
              <text x="208" y="214">1/100<tspan font-size="8" dy="-4">ème</tspan></text><text x="208" y="250">1/50<tspan font-size="8" dy="-4">ème</tspan></text><text x="208" y="285">1/25<tspan font-size="8" dy="-4">ème</tspan></text><text x="208" y="325">1/20<tspan font-size="8" dy="-4">ème</tspan></text><text x="208" y="361">1/10<tspan font-size="8" dy="-4">ème</tspan></text><text x="208" y="396">1/5<tspan font-size="8" dy="-4">ème</tspan></text><text x="208" y="432">1/2</text><text x="208" y="468">1/1</text>
            </g>
            <g font-size="8"><text x="346" y="213">Texte EBI 100</text><text x="676" y="212">EBI_Ligne repère 1/100</text></g>
            <path d="M360 244h21M681 244h35M680 279h36" stroke="#000" stroke-width="7"/>
            <path d="M365 280h11M366 320h8M684 320h17M368 356h4M682 391h4M682 427h4" stroke="#333" stroke-width="4"/>
            <path d="M648 218c6-8 14-9 28-9M664 250c4-5 8-6 16-6M664 286c4-5 8-6 16-6M671 324c4-4 7-4 13-4M676 358c3-3 6-3 13-3" fill="none" stroke="#333" stroke-width="2.500"/>
            <circle cx="643" cy="222" r="5" fill="none" stroke="#333" stroke-width="2"/><circle cx="662" cy="251" r="2"/><circle cx="662" cy="287" r="2"/><circle cx="669" cy="325" r="2"/>
            <path d="M480 212h29M525 212h29M480 247h29M525 247h29M505 281h24M505 320h24M505 356h24M505 391h24M505 427h24M505 463h24" stroke="#c050b8" stroke-width="2.500"/>
            <path d="M482 210l6-7M490 203v7M498 203v7M507 210l-6-7M527 210l6-7M535 203v7M543 203v7M552 210l-6-7" stroke="#d070c8" stroke-width="3"/>
            <path d="M490 238h8v8h-8zM535 239h7v7h-7zM514 277h4v4h-4zM514 316h4v4h-4z" fill="#7a1070"/>
          </g>

          <!-- SYMBOLE VUES ET SECTIONS -->
          <g transform="translate(990 720)">
            <path d="M34 20H465V530H34z" fill="#fff" stroke="#4c4c4c" stroke-width="8"/>
            <path d="M34 20H465V530H34z" fill="none" stroke="#a4a4a4" stroke-width="3"/>
            <path d="M38 49H461M136 49V526" stroke="#444" stroke-width="3"/>
            <text x="270" y="42" font-size="20" text-anchor="middle">SYMBOLE VUES ET SECTIONS</text>
            <path d="M170 51h10v7h-10zM250 51h10v7h-10zM304 51h10v7h-10zM358 51h10v7h-10zM396 51h9v7h-9z"/>
            <g font-size="7" fill="#555"><text x="146" y="60">1/100</text><text x="232" y="60">1/50</text><text x="286" y="60">1/20</text><text x="340" y="60">1/10</text><text x="382" y="60">1/5</text><text x="422" y="59">1/2</text><text x="444" y="59">1/1</text></g>
            <g font-size="8" text-anchor="end" fill="#333">
              <text x="120" y="88">Indicateur d'élévation</text><text x="123" y="162">Indicateur de coupe</text><text x="123" y="174">Titre</text><text x="120" y="244">Indicateur de détail</text><text x="110" y="288">Repère pièce</text><text x="112" y="333">Numéro porte</text><text x="112" y="367">Numéro fenêtre</text><text x="122" y="411">Numéro équipement</text><text x="108" y="445">Niveau - Plan</text><text x="114" y="470">Niveau - Elévation</text><text x="103" y="502">Flèche Nord</text>
            </g>
            <path d="M162 68l17 17-17 17-17-17zM162 112l16 16-16 16-16-16z"/>
            <circle cx="162" cy="85" r="11" fill="#fff" stroke="#000" stroke-width="3"/><path d="M151 85h22M162 74v22M155 78l14 14M169 78l-14 14" stroke="#000" stroke-width="4"/>
            <path d="M200 68l17 17-17 17-17-17z"/><circle cx="200" cy="85" r="12" fill="#fff" stroke="#000" stroke-width="2"/><path d="M192 85h16" stroke="#777" stroke-width="3"/>
            <circle cx="162" cy="128" r="11" fill="#fff" stroke="#000" stroke-width="2"/><path d="M151 128h22M162 120v8M155 133h14" stroke="#000" stroke-width="3"/>
            <path d="M162 144V206M246 132V162M302 136V150" stroke="#222" stroke-width="3"/>
            <path d="M193 118h14M193 136h14M200 118V200M266 114V162M261 124h9M310 124V146M352 128V138M398 128V136" stroke="#7be8e8" stroke-width="3"/>
            <circle cx="246" cy="85" r="8"/><circle cx="265" cy="85" r="8"/><path d="M241 85h10M260 85h10" stroke="#fff" stroke-width="2"/>
            <circle cx="246" cy="124" r="7" fill="#999" stroke="#000" stroke-width="3"/>
            <path d="M298 81h7v8h-7zM306 81h7v8h-7zM299 130h7v8h-7zM346 82h8v6h-8zM391 82h5v5h-5zM347 133h4v7h-4zM392 133h4v5h-4z"/>
            <circle cx="161" cy="232" r="12" fill="#fff" stroke="#000" stroke-width="2"/><path d="M150 232a12 12 0 0 0 23 0z"/><path d="M173 232h16M162 222v10M251 232h8" stroke="#222" stroke-width="3"/>
            <rect x="189" y="210" width="45" height="45" rx="6" fill="#fff" stroke="#444" stroke-width="3"/><rect x="260" y="220" width="23" height="24" rx="3" fill="#fff" stroke="#444" stroke-width="3"/>
            <circle cx="246" cy="232" r="6" fill="#777" stroke="#000" stroke-width="2"/><rect x="306" y="227" width="9" height="10" fill="none" stroke="#444" stroke-width="2"/>
            <path d="M299 229h5v6h-5zM347 229h10v6h-10zM391 229h6v6h-6z"/>
            <path d="M144 267h61v34h-61z" fill="#fff" stroke="#222" stroke-width="3"/><path d="M158 269h28v8h-28zM163 278h20v9h-20zM155 290h14v9h-14zM184 284h15v9h-15z"/><path d="M144 275h61M144 282h61M144 290h61" stroke="#222" stroke-width="2"/>
            <path d="M244 275h31v18h-31z" fill="#555"/><path d="M248 289l8-9 5 7 10-8" stroke="#ddd" stroke-width="2" fill="none"/>
            <path d="M307 281h14v9h-14zM358 282h7v7h-7zM402 284h4v4h-4z"/>
            <circle cx="161" cy="330" r="11" fill="#fff" stroke="#000" stroke-width="4"/><path d="M152 323h18v6h-18zM152 332h18v3h-18z"/>
            <circle cx="161" cy="364" r="10" fill="#fff" stroke="#000" stroke-width="3"/><path d="M150 362h22v3h-22zM156 356h11v3h-11zM156 369h11v3h-11z"/>
            <circle cx="246" cy="330" r="8"/><path d="M241 328h10M241 332h10" stroke="#bbb" stroke-width="2"/><circle cx="246" cy="364" r="7" fill="#888" stroke="#222" stroke-width="2"/>
            <path d="M149 394h25v25h-25z" fill="#fff" stroke="#222" stroke-width="3"/><path d="M157 397h9v6h-9zM154 408h14v8h-14z"/>
            <path d="M240 401h13v12h-13z" fill="#999" stroke="#222" stroke-width="2"/><path d="M243 404h7v6h-7z"/>
            <path d="M152 442l8-5 4 3 7-3 2 4 7 1-8 4h-16zM157 471v-12h9l5 5 9 2v4h-12zM243 442l6-3 9 2-5 4h-9zM247 471v-6h6l4 5z"/>
            <path d="M144 487l30-4 3 5-28 4zM176 490l7 21-4 2-5-18z"/><circle cx="162" cy="501" r="14" fill="none" stroke="#222" stroke-width="3"/><path d="M148 501h28M162 487v28M147 492l6 25 26-6" stroke="#222" stroke-width="2" fill="none"/>
            <path d="M238 494l17-3 2 13-16 4z" fill="#bbb" stroke="#222" stroke-width="3"/><path d="M242 500l8-5v10z"/>
            <circle cx="301" cy="330" r="4"/><circle cx="301" cy="364" r="4"/><circle cx="301" cy="407" r="4"/><circle cx="301" cy="499" r="5"/><circle cx="303" cy="443" r="3"/><circle cx="303" cy="471" r="2"/>
            <circle cx="348" cy="330" r="2"/><circle cx="348" cy="364" r="2"/><circle cx="349" cy="407" r="3"/><circle cx="349" cy="443" r="2"/><circle cx="349" cy="473" r="2"/><circle cx="393" cy="330" r="2"/>
            <path d="M391 364h3M391 407h3M391 443h3M391 473h3M432 84h3M451 84h3M432 136h3M449 136h3M432 232h3M451 232h3M431 285h3M451 285h3M431 330h3M449 330h3M449 364h3M449 407h3M449 443h3M449 473h3" stroke="#888" stroke-width="3"/>
          </g>

          <!-- cartouche -->
          <g transform="translate(1620 0)" fill="none" stroke="#444" stroke-width="3">
            <path d="M32 82H210V149H32zM32 157H210V787H32zM32 223H210M32 290H210M32 413H210M32 538H210M32 662H210"/>
            <path d="M32 795H210V921H32zM32 930H210V1063H32zM32 947H210M32 964H210M32 980H210M32 997H210M32 1014H210M32 1031H210M32 1048H210"/>
            <path d="M32 1072H210V1286H32zM32 1109H210M32 1161H210M32 1197H210M32 1240H210M91 1197V1286M150 1197V1240"/>
          </g>
          <g transform="translate(1620 0)" fill="#000">
            <path d="M35 160h67v11H35zM35 225h67v10H35zM35 291h110v10H35zM35 415h57v11H35zM35 539h35v11H35zM35 664h91v10H35zM35 931h27v11H35zM37 948h6v114h-6zM35 1074h20v11H35zM35 1110h43v12H35zM35 1161h16v10H35zM35 1197h23v11H35zM94 1197h22v11H94zM153 1197h22v11h-22zM35 1241h22v11H35zM94 1241h30v12H94z"/>
          </g>
          <g transform="translate(1620 0)" text-anchor="middle" fill="#222">
            <g font-size="11" font-weight="900" fill="#000" stroke="#000"><text x="54" y="67">ELLIOTT</text><text x="112" y="67">BARNES</text><text x="178" y="67">INTERIORS</text></g>
            <g font-size="8"><text x="121" y="103">128, rue d'Alésia</text><text x="121" y="114">75014 Paris</text><text x="121" y="125">Tél : (1)53 63 98 56 96</text><text x="121" y="136">email: info@ebinteriors.com</text></g>
            <g font-size="13">
              <text x="121" y="200">NOM MAITRE D'OUVRAGE</text><text x="121" y="262">ADRESSE du PROJET</text>
              <text x="121" y="323">NOM MAITRE D'OEUVRE</text><text x="121" y="340">ADRESSE</text><text x="121" y="357">TELEPHONE</text><text x="121" y="373">PORTABLE</text><text x="121" y="390">EMAIL</text>
              <text x="121" y="447">NOM BUREAU D'ETUDE</text><text x="121" y="464">ADRESSE</text><text x="121" y="481">TELEPHONE</text><text x="121" y="498">PORTABLE</text><text x="121" y="514">EMAIL</text>
              <text x="121" y="572">NOM BET FLUIDE</text><text x="121" y="589">ADRESSE</text><text x="121" y="606">TELEPHONE</text><text x="121" y="622">PORTABLE</text><text x="121" y="639">EMAIL</text>
              <text x="121" y="696">NOM ECLAIRAGISTE</text><text x="121" y="713">ADRESSE</text><text x="121" y="729">TELEPHONE</text><text x="121" y="746">PORTABLE</text><text x="121" y="763">EMAIL</text>
            </g>
            <g font-size="9" text-decoration="underline"><text x="121" y="808">AVERTISSEMENT</text><text x="121" y="820">PLAN DE PRINCIPE</text></g>
            <g font-size="8"><text x="121" y="841">Toutes les côtes et surfaces sont données à</text><text x="121" y="852">titre indicatif et sont à vérifier par</text><text x="121" y="864">l'entreprise sous sa responsabilité.</text><text x="121" y="875">Ceci, en bonne coordination avec toutes</text><text x="121" y="887">les autres entreprises concernées.</text><text x="121" y="898">Les erreurs ou omissions doivent être</text><text x="121" y="910">signalées à l'Architecte d'Intérieur.</text></g>
            <text x="120" y="1098" font-size="17">CODE PROJET</text><text x="120" y="1146" font-size="14">TITRE DU DESSIN</text><text x="121" y="1184" font-size="14">12/01/2025</text>
            <g font-size="12"><text x="61" y="1224">INK</text><text x="120" y="1224">PHASE</text><text x="179" y="1224">A3</text></g>
            <g font-size="17"><text x="62" y="1271">1/1</text><text x="149" y="1270">N° PLAN</text></g>
          </g>
        </g>
        <g fill="none" stroke="#3f62c4" stroke-width="4"><path d="M29 1281V1428H113zM29 1414h12v14M34 1318l7 11 10-13M41 1329v10M80 1406l16 16M98 1404l-18 18"/></g>
      </svg>
      <div class="absolute right-[5px] top-[4px] flex items-center gap-[5px] text-[#333]">
        <button class="w-[5px] h-[2px] bg-white outline outline-[#555]" aria-label="Réduire la vue"></button>
        <button class="size-[6px] border border-[#333] bg-[#eee]" aria-label="Restaurer la vue"></button>
        <button class="size-[7px] border border-[#555] bg-[#eee] flex items-center justify-center text-black" aria-label="Fermer la vue"><svg class="size-[6px] shrink-0"><use href="#x"/></svg></button>
      </div>
      <div class="absolute right-0 top-[142px] w-[19px] h-[73px] bg-[#a3a3a3] border-l border-[#b4b4b4] flex flex-col items-center justify-around text-[#b2b2b2]">
        <button aria-label="Zoom fenêtre"><svg class="size-[11px]"><use href="#search"/></svg></button>
        <button class="opacity-30" aria-label="Panoramique vue"><svg class="size-[10px]"><use href="#hand"/></svg></button>
        <button class="opacity-30" aria-label="Zoom vue"><svg class="size-[10px]"><use href="#zoomx"/></svg></button>
        <button aria-label="Options de navigation"><svg class="size-[6px]"><use href="#dn"/></svg></button>
      </div>
    </div>
    <div class="h-[40px] shrink-0 flex pt-[2px] pb-px bg-[#343e4e]">
      <div class="w-[14px] flex flex-col items-center justify-around text-[#e4e6e9] pl-px">
        <button aria-label="Fermer la ligne de commande"><svg class="size-[8px]"><use href="#x"/></svg></button>
        <button aria-label="Personnaliser"><svg class="size-[9px]" viewBox="0 0 16 16"><path d="M2 14l7-7" stroke="currentColor" stroke-width="3"/><path d="M8 4l4-3v3l3 1-3 4-4-1z" fill="currentColor"/></svg></button>
      </div>
      <div class="flex-1 flex flex-col font-['DejaVu_Sans_Mono','Liberation_Mono',monospace] text-[#222]">
        <div class="flex-1 bg-[#c8c8c8] pl-px text-[7px] leading-[8px] whitespace-pre"><p>Commande:   &lt;Passe en: EBI_Cart-A3&gt;</p><p>Régénération de la présentation.</p><p>Régénération de l'objet - fenêtres en mémoire cache.</p></div>
        <label class="h-[11px] bg-white border-t border-[#999] flex items-center pl-[2px] gap-[2px]"><svg class="w-[9px] h-[7px] text-[#555]" viewBox="0 0 16 12"><path d="M1 1h14v10H1zM1 3h14M3 6l2 1-2 2" fill="none" stroke="currentColor"/></svg><svg class="size-[4px]"><use href="#dn"/></svg><input class="flex-1 text-[7px] italic placeholder:text-[#8a8a8a] pl-[2px]" placeholder="Entrez une commande" aria-label="Ligne de commande"></label>
      </div>
    </div>
  </div>
</main>

<footer class="flex items-center h-[16px] shrink-0 bg-[#1f2633] pl-[9px]">
  <button class="text-[#e4e6e9]" aria-label="Menu des présentations"><svg class="size-[9px]"><use href="#menu"/></svg></button>
  <span class="ml-[7px] h-[12px] w-px rotate-[20deg] bg-[#3b4453]"></span>
  <a href="#" class="ml-[6px]">Objet</a>
  <a href="#" class="ml-[4px] h-[16px] leading-[16px] bg-[#3b4453] px-[9px] [clip-path:polygon(6px_0,100%_0,calc(100%-6px)_100%,0_100%)] text-white font-bold">EBI_Cart-A3</a>
  <button class="ml-[5px] text-[#e4e6e9]" aria-label="Nouvelle présentation"><svg class="size-[8px]"><use href="#plus"/></svg></button>
  <span class="ml-[8px] h-[12px] w-px rotate-[20deg] bg-[#3b4453]"></span>
  <div class="ml-auto flex items-center h-[16px] bg-[#2c3646] text-[#dfe2e6]">
    <button class="w-[26px] text-center">PAPIER</button>
    <button class="w-[14px] h-[13px] mr-px bg-[#5c8fc6] flex items-center justify-center" aria-label="Grille"><svg class="size-[9px]" viewBox="0 0 16 16"><path d="M2 3v9M2 12h7M12 12h3" stroke="#fff" stroke-width="2"/></svg></button>
    <button class="w-[14px] h-[13px] mr-px bg-[#5c8fc6] flex items-center justify-center" aria-label="Ortho"><svg class="size-[9px]" viewBox="0 0 16 16"><path d="M3 1v12h12" stroke="#dbe9f7" stroke-width="1.500" fill="none"/></svg></button>
    <button class="w-[13px] flex justify-center" aria-label="Repérage polaire"><svg class="size-[9px]" viewBox="0 0 16 16"><path d="M13 4a6.500 6.500 0 1 0 1 6M8 8h7M8 8l6-6" stroke="#aab1bb" stroke-width="1.500" fill="none"/></svg></button>
    <svg class="w-[9px] h-[5px]"><use href="#dn"/></svg>
    <button class="w-[13px] flex justify-center" aria-label="Isométrique"><svg class="size-[9px]" viewBox="0 0 16 16"><path d="M5 2l3 6v6" stroke="#7d8694" stroke-width="1.500" fill="none"/></svg></button>
    <svg class="w-[9px] h-[5px]"><use href="#dn"/></svg>
    <button class="w-[13px] h-[13px] mr-px bg-[#5c8fc6] flex items-center justify-center" aria-label="Repérage d'accrochage"><svg class="size-[10px]" viewBox="0 0 16 16"><path d="M1 14h14M3 12L13 2" stroke="#e2eefa" stroke-width="1.500"/><path d="M1 9h4v4H1z" fill="#e2eefa"/></svg></button>
    <button class="w-[13px] h-[13px] mr-px bg-[#5c8fc6] flex items-center justify-center" aria-label="Accrochage aux objets"><svg class="size-[10px]" viewBox="0 0 16 16"><path d="M4 4h9v10H4z" stroke="#e2eefa" fill="none"/><path d="M1 1h5v5H1z" fill="none" stroke="#e2eefa" stroke-width="1.500"/></svg></button>
    <svg class="w-[9px] h-[5px]"><use href="#dn"/></svg>
    <button class="w-[14px] flex justify-center" aria-label="Epaisseurs"><svg class="size-[9px]" viewBox="0 0 16 16"><path d="M1 3h14M1 8h6M9 8h6M1 13h6M9 13h6" stroke="currentColor" stroke-width="2.500"/></svg></button>
    <button class="w-[14px] flex justify-center" aria-label="Transparence"><svg class="size-[9px]" viewBox="0 0 16 16"><path d="M1 1h14v14H1z" fill="none" stroke="currentColor"/><path d="M1 3h14M1 9h14" stroke="currentColor" stroke-width="3" stroke-dasharray="3"/><path d="M4 6h12M4 12h12" stroke="currentColor" stroke-width="3" stroke-dasharray="3"/></svg></button>
    <button class="w-[15px] flex justify-center" aria-label="Cycle de sélection"><svg class="size-[9px]" viewBox="0 0 16 16"><path d="M5 6h10v9H5z" fill="#86d6a8"/><path d="M1 1l6 6M1 1h4M1 1v4" stroke="#86d6a8" stroke-width="2"/></svg></button>
    <button class="w-[14px] flex justify-center" aria-label="Filtrage"><svg class="size-[9px]" viewBox="0 0 16 16"><path d="M3 3h11v10H3zM7 1v5H1M15 10h-5v5" stroke="#9aa3b0" stroke-width="1.500" fill="none"/></svg></button>
    <button class="w-[12px] h-[13px] mr-px bg-[#5c8fc6] flex items-center justify-center" aria-label="Visibilité des annotations"><svg class="size-[10px]" viewBox="0 0 16 16"><path d="M2 14l5-12h2l2 12-4-4z" fill="#fff"/><path d="M12 2v6M10 4h5" stroke="#fff"/></svg></button>
    <button class="w-[12px] h-[13px] mr-px bg-[#5c8fc6] flex items-center justify-center" aria-label="Echelle automatique"><svg class="size-[10px]" viewBox="0 0 16 16"><path d="M2 14l5-12h2l2 12-4-4z" fill="#fff"/><path d="M11 2l4 4M15 2l-4 4" stroke="#fff"/></svg></button>
    <button class="w-[15px] flex justify-center" aria-label="Espace de travail"><svg class="size-[10px]" viewBox="0 0 16 16"><circle cx="8" cy="8" r="4" fill="none" stroke="currentColor" stroke-width="3"/><path d="M8 0v3M8 13v3M0 8h3M13 8h3M2 2l2 2M12 12l2 2M14 2l-2 2M2 14l2-2" stroke="currentColor" stroke-width="2"/></svg></button>
    <svg class="w-[8px] h-[5px]"><use href="#dn"/></svg>
    <button class="w-[14px] flex justify-center" aria-label="Moniteur d'annotations"><svg class="size-[9px]"><use href="#plus"/></svg></button>
    <button class="w-[15px] flex justify-center" aria-label="Unités"><svg class="size-[9px]" viewBox="0 0 16 16"><path d="M3 1h10v14H3zM3 5h10M3 8h10M3 11h10" stroke="#aab1bb" stroke-width="1.500" fill="none"/></svg></button>
    <button class="w-[14px] flex justify-center" aria-label="Propriétés rapides"><svg class="size-[9px]" viewBox="0 0 16 16"><path d="M8 11H1V2h13v5" stroke="currentColor" stroke-width="1.500" fill="none"/><path d="M8 9h7v6H8z" fill="currentColor"/></svg></button>
    <svg class="w-[9px] h-[5px]"><use href="#dn"/></svg>
    <button class="w-[15px] flex justify-center" aria-label="Isoler des objets"><svg class="size-[10px]" viewBox="0 0 16 16"><path d="M2 2h5v5H2zM7 14l3-5 3 5z" stroke="#8e97a4" fill="none" stroke-width="1.300"/><circle cx="12" cy="5" r="2.500" stroke="#8e97a4" fill="none"/></svg></button>
    <button class="w-[13px] h-[13px] mx-px bg-[#5c8fc6] flex items-center justify-center" aria-label="Performances graphiques"><svg class="size-[10px]" viewBox="0 0 16 16"><circle cx="8" cy="8" r="7" fill="#b9d5ee"/><path d="M5 11l6-6" stroke="#5c8fc6" stroke-width="2"/></svg></button>
    <button class="w-[16px] flex justify-center" aria-label="Confiance"><svg class="size-[10px]" viewBox="0 0 16 16"><circle cx="6" cy="4" r="3" fill="#f1c04e"/><path d="M2 8h7v7H2z" fill="#3d7dd0"/><circle cx="11" cy="10" r="3" fill="#e8b13c"/><path d="M8 13h7v2H8z" fill="#8bb6e8"/></svg></button>
    <button class="w-[19px] flex justify-center" aria-label="Plein écran"><svg class="size-[10px]" viewBox="0 0 16 16"><path d="M1 3h14v11H1zM9 6h3v2M7 11H4V9" stroke="#aab1bb" stroke-width="1.500" fill="none"/></svg></button>
    <button class="w-[12px] flex justify-center" aria-label="Personnalisation"><svg class="size-[9px]"><use href="#menu"/></svg></button>
  </div>
</footer>
</body>
</html>
